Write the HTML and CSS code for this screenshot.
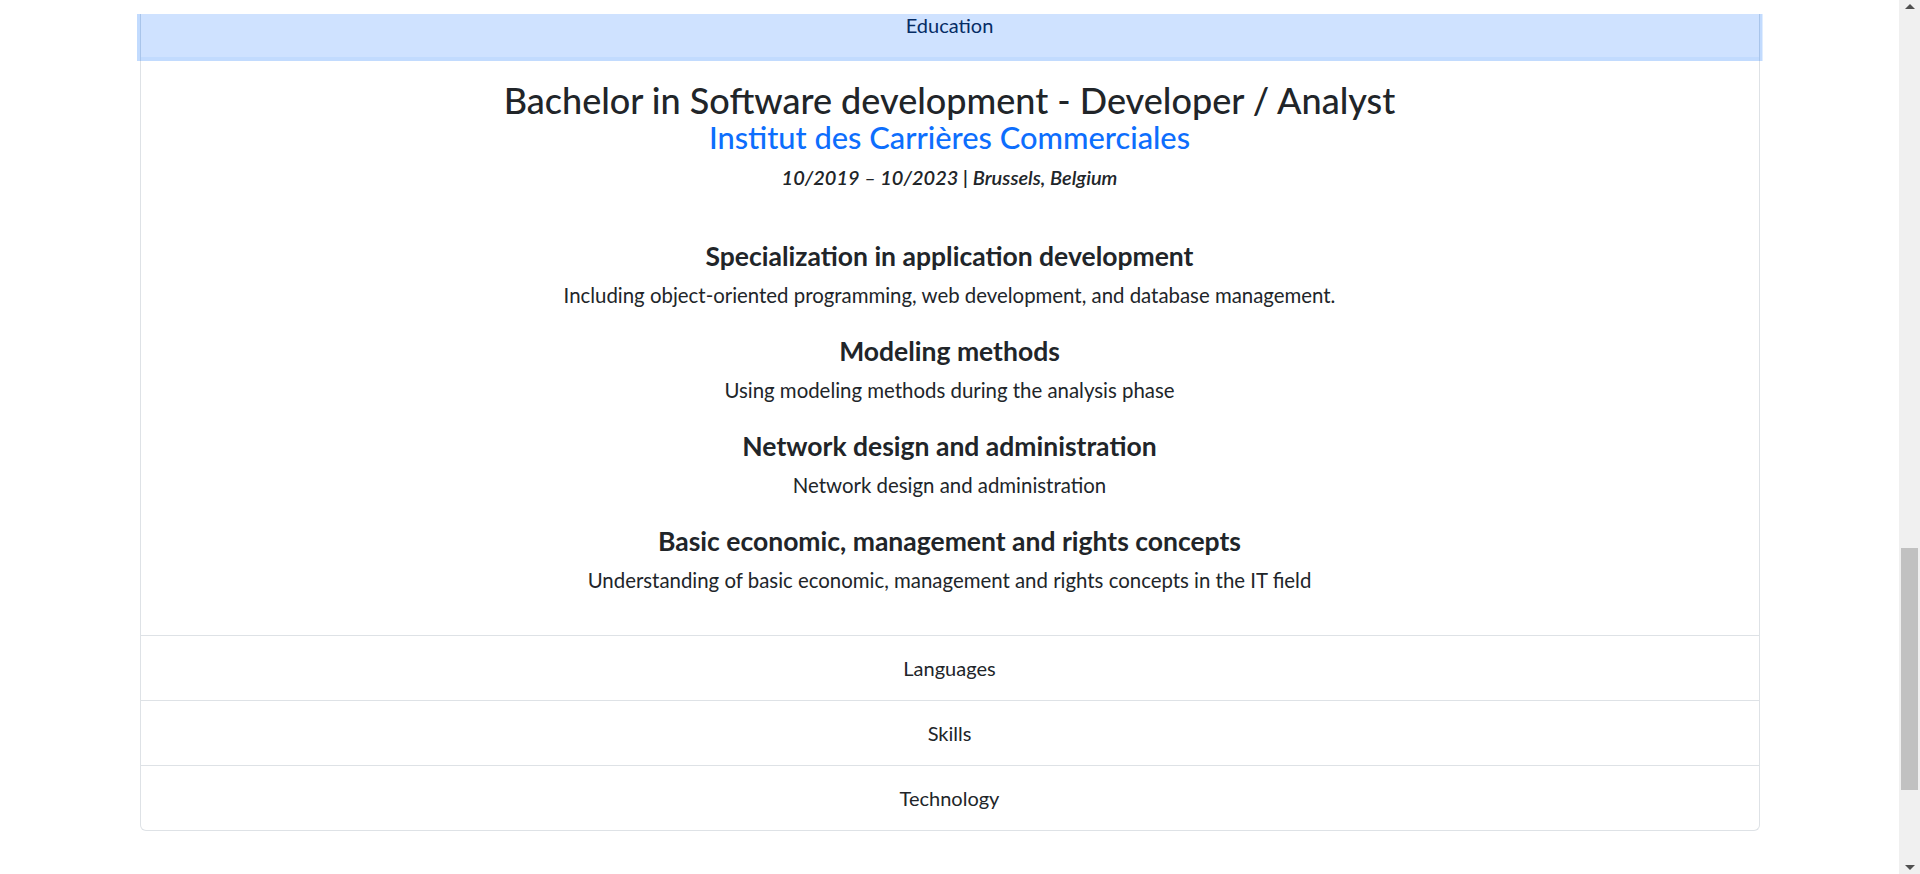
FILE: index.html
```html
<!DOCTYPE html>
<html lang="en">
<head>
<meta charset="utf-8">
<title>CV - Education</title>
<link rel="stylesheet" href="styles.css">
</head>
<body>
<main class="page">
  <div class="accordion">
    <section class="acc-item acc-item-first">
      <div class="acc-head acc-head-open">Education</div>
      <div class="acc-body">
        <h3 class="degree">Bachelor in Software development - Developer / Analyst</h3>
        <h4 class="school">Institut des Carrières Commerciales</h4>
        <h6 class="period">10/2019 – 10/2023 | Brussels, Belgium</h6>
        <div class="topics">
          <div class="topic">
            <h5 class="topic-title">Specialization in application development</h5>
            <p class="topic-text">Including object-oriented programming, web development, and database management.</p>
          </div>
          <div class="topic">
            <h5 class="topic-title">Modeling methods</h5>
            <p class="topic-text">Using modeling methods during the analysis phase</p>
          </div>
          <div class="topic">
            <h5 class="topic-title">Network design and administration</h5>
            <p class="topic-text">Network design and administration</p>
          </div>
          <div class="topic">
            <h5 class="topic-title">Basic economic, management and rights concepts</h5>
            <p class="topic-text">Understanding of basic economic, management and rights concepts in the IT field</p>
          </div>
        </div>
      </div>
    </section>
    <section class="acc-item"><div class="acc-head">Languages</div></section>
    <section class="acc-item"><div class="acc-head">Skills</div></section>
    <section class="acc-item acc-item-last"><div class="acc-head">Technology</div></section>
  </div>
</main>
<div class="scrollbar">
  <span class="sb-arrow sb-up"></span>
  <span class="sb-thumb"></span>
  <span class="sb-arrow sb-down"></span>
</div>
</body>
</html>
```

FILE: styles.css
```css
html, body {
  margin: 0;
  padding: 0;
  height: 100%;
  overflow: hidden;
  background: #ffffff;
}

body {
  font-family: "Lato", "Open Sans", sans-serif;
  color: #212529;
}

.page {
  margin-right: 21px;
  padding-top: 14px;
}

.accordion {
  width: 1620px;
  margin: 0 auto;
}

.acc-item {
  border: 1px solid #dee2e6;
  border-top: 0;
  background: #fff;
}

.acc-item-last {
  border-bottom-left-radius: 6px;
  border-bottom-right-radius: 6px;
}

.acc-head {
  height: 64px;
  display: flex;
  align-items: center;
  justify-content: center;
  font-size: 20px;
  color: #212529;
}

.acc-head-open {
  position: relative;
  z-index: 3;
  height: 43px;
  align-items: flex-start;
  line-height: 22px;
  background: #cfe2ff;
  color: #052c65;
  box-shadow: 0 0 0 4px rgba(13, 110, 253, 0.25);
  clip-path: inset(0 -4px -4px -4px);
}

.acc-body {
  padding: 22px 25px 40px;
  text-align: center;
}

.degree {
  margin: 0;
  font-size: 36px;
  line-height: 42px;
  font-weight: 500;
}

.school {
  margin: 0;
  font-size: 30.8px;
  line-height: 34px;
  font-weight: 500;
  color: #0d6efd;
}

.period {
  margin: 10px 0 0;
  font-size: 20px;
  line-height: 24px;
  font-weight: 600;
  font-style: italic;
}

.topics {
  margin-top: 52px;
  display: flex;
  flex-direction: column;
  gap: 26px;
}

.topic-title {
  margin: 0 0 9px;
  font-size: 26.5px;
  line-height: 30px;
  font-weight: 700;
}

.topic-text {
  margin: 0;
  font-size: 20.4px;
  line-height: 30px;
  font-weight: 400;
}

.scrollbar {
  position: fixed;
  top: 0;
  right: 0;
  width: 21px;
  height: 100%;
  background: #f0f0f0;
}

.sb-thumb {
  position: absolute;
  left: 2px;
  right: 2px;
  top: 548px;
  height: 242px;
  background: #c1c1c1;
}

.sb-arrow {
  position: absolute;
  left: 6px;
  width: 0;
  height: 0;
  border-left: 5px solid transparent;
  border-right: 5px solid transparent;
}

.sb-up {
  top: 4px;
  border-bottom: 5px solid #505050;
}

.sb-down {
  bottom: 4px;
  border-top: 5px solid #505050;
}
```
